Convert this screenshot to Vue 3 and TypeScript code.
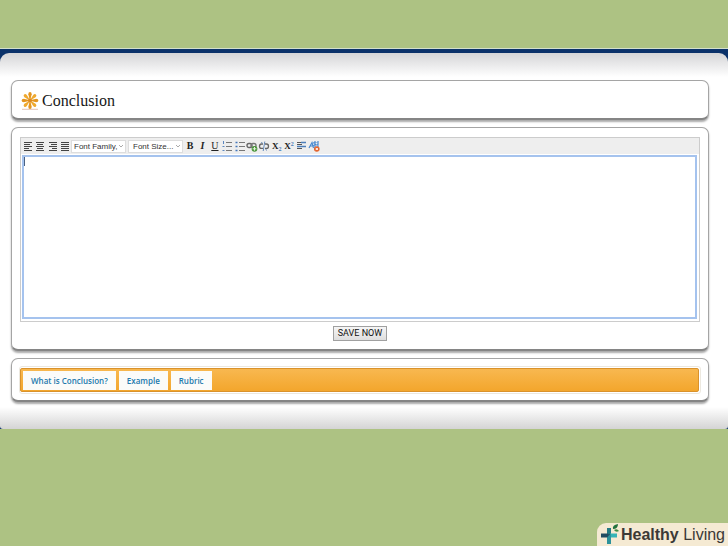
<script setup lang="ts">
import { ref } from 'vue'

type Align = 'left' | 'center' | 'right' | 'full'

const alignments: { id: Align; d: string }[] = [
  { id: 'left', d: 'M2 2.5h8M2 4.5h6M2 6.5h8M2 8.5h5M2 10.5h8' },
  { id: 'center', d: 'M2 2.5h8M3 4.5h6M2 6.5h8M3 8.5h6M2 10.5h8' },
  { id: 'right', d: 'M2 2.5h8M4 4.5h6M2 6.5h8M5 8.5h5M2 10.5h8' },
  { id: 'full', d: 'M2 2.5h8M2 4.5h8M2 6.5h8M2 8.5h8M2 10.5h8' },
]
const tabs = ['What is Conclusion?', 'Example', 'Rubric']
const petals = Array.from({ length: 8 }, (_, i) => i * 45)

const text = ref('')
const family = ref('Font Family,')
const size = ref('Font Size...')
const activeTab = ref(0)
</script>

<template>
  <div class="page">
    <div class="backdrop">
      <main class="sheet">
        <header class="card title-card">
          <svg class="flower" viewBox="0 0 18 18" aria-hidden="true">
            <path d="M1 17.3h16" stroke="#e4c3b4" stroke-width="1" />
            <g transform="translate(9 8.5)">
              <path
                v-for="angle in petals"
                :key="angle"
                :transform="`rotate(${angle})`"
                d="M-.4-1L-1.7-6.2Q-1.7-8.4 0-8.4T1.7-6.2L.4-1Z"
                :fill="angle % 90 ? '#efa92f' : '#e4951f'"
              />
              <circle r="2" fill="#dd8a22" />
            </g>
          </svg>
          <h1>Conclusion</h1>
        </header>

        <section class="card editor-card">
          <div class="editor">
            <div class="toolbar" role="toolbar" aria-label="Formatting">
              <div class="group aligns">
                <button v-for="a in alignments" :key="a.id" type="button" :aria-label="'Align ' + a.id">
                  <svg viewBox="0 0 12 12"><path :d="a.d" stroke="#444" fill="none" /></svg>
                </button>
              </div>
              <div class="pickers">
                <span class="picker">
                  <select v-model="family" aria-label="Font family"><option>Font Family,</option></select>
                  <svg viewBox="0 0 6 4" aria-hidden="true"><path d="M1 1l2 2 2-2" fill="none" stroke="#aaa" /></svg>
                </span>
                <span class="picker">
                  <select v-model="size" class="size" aria-label="Font size"><option>Font Size...</option></select>
                  <svg viewBox="0 0 6 4" aria-hidden="true"><path d="M1 1l2 2 2-2" fill="none" stroke="#aaa" /></svg>
                </span>
              </div>
              <div class="group formats">
                <button type="button" class="glyph bold" aria-label="Bold">B</button>
                <button type="button" class="glyph italic" aria-label="Italic">I</button>
                <button type="button" class="glyph underline" aria-label="Underline">U</button>
                <button type="button" aria-label="Numbered list">
                  <svg viewBox="0 0 12 12">
                    <path d="M2.5 1v3M1.5 6.5h2M1.5 10.5h2" stroke="#5b86bf" fill="none" />
                    <path d="M5 2.5h6M5 6.5h6M5 10.5h6" stroke="#777" fill="none" />
                  </svg>
                </button>
                <button type="button" aria-label="Bulleted list">
                  <svg viewBox="0 0 12 12">
                    <path d="M1.5 2.5h2M1.5 6.5h2M1.5 10.5h2" stroke="#4577ba" stroke-width="1.6" fill="none" />
                    <path d="M5 2.5h6M5 6.5h6M5 10.5h6" stroke="#777" fill="none" />
                  </svg>
                </button>
                <button type="button" aria-label="Insert link">
                  <svg viewBox="0 0 12 12">
                    <rect x="1" y="3.5" width="5" height="4" rx="2" fill="none" stroke="#666" stroke-width="1.4" />
                    <rect x="5" y="3.5" width="5" height="4" rx="2" fill="none" stroke="#777" stroke-width="1.4" />
                    <circle cx="8.5" cy="8.8" r="2.9" fill="#4b963c" />
                    <path d="M8.5 7v3.6M6.7 8.8h3.6" stroke="#e4f3dc" />
                  </svg>
                </button>
                <button type="button" aria-label="Remove link">
                  <svg viewBox="0 0 12 12">
                    <path d="M5 4H3.5Q1.5 4 1.5 6.2T3.5 8.4H5M7 4h1.5q2 0 2 2.2T8.500 8.400H7" fill="none" stroke="#666" stroke-width="1.3" />
                    <path d="M6.8 1.5L5.2 11M3.5 2l.8 1.500M8.5 10.5L7.8 9" fill="none" stroke="#6288b8" />
                  </svg>
                </button>
                <button type="button" class="glyph script" aria-label="Subscript">X<sub>2</sub></button>
                <button type="button" class="glyph script" aria-label="Superscript">X<sup>2</sup></button>
                <button type="button" aria-label="Insert rule">
                  <svg viewBox="0 0 12 12">
                    <path d="M2 2.5h4M2 4.500h5M2 8.500h5" stroke="#555" fill="none" />
                    <path d="M6 2.5h5M2 6.5h9" stroke="#4e7fba" stroke-width="1.5" fill="none" />
                  </svg>
                </button>
                <button type="button" aria-label="Remove formatting">
                  <svg viewBox="0 0 12 12">
                    <path d="M1 8L4 2.5 5.5 8M2.3 6h3M7 1v9M10 1v6M5 3l5-1.5M5.5 5.5l5-1" stroke="#4789d0" stroke-width="1.2" fill="none" />
                    <circle cx="8.8" cy="9" r="2.8" fill="#e3622c" />
                    <path d="M7.7 7.9l2.2 2.2M9.9 7.9l-2.2 2.2" stroke="#fff" />
                  </svg>
                </button>
              </div>
            </div>
            <textarea v-model="text" aria-label="Conclusion text"></textarea>
          </div>
          <button type="button" class="save">SAVE NOW</button>
        </section>

        <section class="card tabs-card">
          <div class="tabs-frame">
            <div class="tabs" role="tablist">
              <button
                v-for="(tab, i) in tabs"
                :key="tab"
                type="button"
                role="tab"
                :aria-selected="activeTab === i"
                @click="activeTab = i"
              >
                {{ tab }}
              </button>
            </div>
          </div>
        </section>
      </main>
    </div>

    <div class="brand">
      <svg viewBox="0 0 22 22" aria-hidden="true">
        <path d="M9 4h4v6H9z" fill="#247b83" />
        <path d="M9 10h4v10H9z" fill="#24566a" />
        <path d="M3 9.500h7v4H3z" fill="#234c61" />
        <path d="M12 9.500h7v4h-7z" fill="#35b4b7" />
        <path d="M9 13.500l4-4V20H9z" fill="#2d929b" />
        <path d="M15 5q-1-4 5-5Q20 5 15 5z" fill="#24733e" />
        <path d="M16 6q3-2 5 1-3 2-5-1z" fill="#3b8c45" />
      </svg>
      <span><strong>Healthy</strong> Living</span>
    </div>
  </div>
</template>

<style>
body {
  margin: 0;
}
</style>

<style scoped>
.page {
  box-sizing: border-box;
  min-height: 100vh;
  padding: 48px 0 117px;
  background: #adc283;
  font-family: 'Liberation Sans', Arial, sans-serif;
}

.backdrop {
  padding-top: 4px;
  background: #0b326a;
  border-top: 1px solid #d3dfcc;
}

.sheet {
  display: flex;
  flex-direction: column;
  gap: 7px;
  padding: 27px 19px 27px 11px;
  border-radius: 9px 9px 3px 3px;
  background:
    linear-gradient(#d5d5d7, #fff) top / 100% 24px no-repeat,
    linear-gradient(#fff, #d4d4d4) bottom / 100% 22px no-repeat,
    #fff;
}

.card {
  box-sizing: border-box;
  border: 1px solid #a5a5a5;
  border-bottom: 2px solid #858585;
  border-radius: 7px;
  background: #fff;
  box-shadow: 0 2px 2px #aaa;
}

.title-card {
  display: flex;
  align-items: center;
  gap: 3px;
  height: 40px;
  padding: 2px 9px 0;
}

.flower {
  width: 18px;
  height: 18px;
}

h1 {
  margin: 0;
  color: #171717;
  font: 400 16px/20px 'Liberation Serif', Georgia, serif;
}

.editor-card {
  display: flex;
  flex-direction: column;
  align-items: center;
  gap: 4px;
  padding: 9px 8px 8px;
}

.editor {
  box-sizing: border-box;
  width: 100%;
  border: 1px solid #ccc;
}

.toolbar {
  display: flex;
  align-items: center;
  height: 16px;
  padding: 0 1px;
  background: #eee;
}

.group {
  display: flex;
}

.aligns {
  width: 49px;
}

.formats {
  width: 136px;
}

.group button {
  display: flex;
  flex: 1;
  align-items: center;
  justify-content: center;
  min-width: 0;
  height: 16px;
  padding: 0;
  border: 0;
  background: none;
}

.group svg {
  flex: none;
  width: 12px;
  height: 12px;
}

.group .glyph {
  color: #222;
  font: 700 10px/16px 'Liberation Serif', serif;
}

.group .italic {
  font-style: italic;
}

.group .underline {
  font-weight: 400;
  text-decoration: underline;
}

.group .script {
  font-size: 9px;
}

.script sub,
.script sup {
  color: #4a7ab8;
  font-size: 6px;
  line-height: 6px;
}

.script sub {
  align-self: flex-end;
  padding-bottom: 2px;
}

.script sup {
  align-self: flex-start;
  padding-top: 3px;
}

.pickers {
  display: flex;
  gap: 2px;
  padding-right: 1px;
}

.picker {
  display: flex;
  align-items: center;
  box-sizing: border-box;
  width: 55px;
  height: 13px;
  padding-right: 1px;
  border: 1px solid #ddd;
  background: #fff;
}

.picker select {
  flex: 1;
  min-width: 0;
  padding: 0 0 0 2px;
  border: 0;
  background: none;
  color: #333;
  font: 8px/11px 'Liberation Sans', Arial, sans-serif;
  appearance: none;
}

.picker .size {
  padding-left: 4px;
}

.picker svg {
  flex: none;
  width: 6px;
  height: 4px;
}

textarea {
  display: block;
  box-sizing: border-box;
  width: calc(100% - 3px);
  height: 164px;
  margin: 1px 2px 2px 1px;
  padding: 2px 4px;
  border: 2px solid #a5c3ee;
  outline: 0;
  background: linear-gradient(#4a6182, #4a6182) 0 0 / 1px 9px no-repeat #fff;
  font: 10px/12px 'Liberation Sans', Arial, sans-serif;
  resize: none;
}

.save {
  width: 54px;
  height: 15px;
  padding: 0;
  border: 1px solid #a0a0a0;
  background: linear-gradient(#f6f6f6, #dedede);
  color: #111;
  font: 9px/13px Roboto, 'Liberation Sans', sans-serif;
}

.tabs-card {
  padding: 7px 7px 6px;
}

.tabs-frame {
  padding: 1px 1px 1px 0;
  border: 1px solid #ece8df;
  border-radius: 3px;
}

.tabs {
  display: flex;
  gap: 3px;
  height: 19px;
  padding: 2px 2px 1px;
  border: 1px solid #d9922c;
  border-radius: 2px;
  background: linear-gradient(#f8b850, #f3a62c);
}

.tabs button {
  padding: 0 8px;
  border: 0;
  background: #fbfbf9;
  color: #2279ad;
  font: 600 8px/19px 'Open Sans', 'Noto Sans', sans-serif;
}

.brand {
  position: absolute;
  right: 0;
  bottom: 0;
  display: flex;
  align-items: center;
  gap: 1px;
  height: 23px;
  padding: 0 3px 0 1px;
  border-radius: 9px 0 0;
  background: #f5ead3;
  color: #3b3936;
  font-size: 16px;
  line-height: 23px;
}

.brand svg {
  width: 22px;
  height: 22px;
}
</style>
